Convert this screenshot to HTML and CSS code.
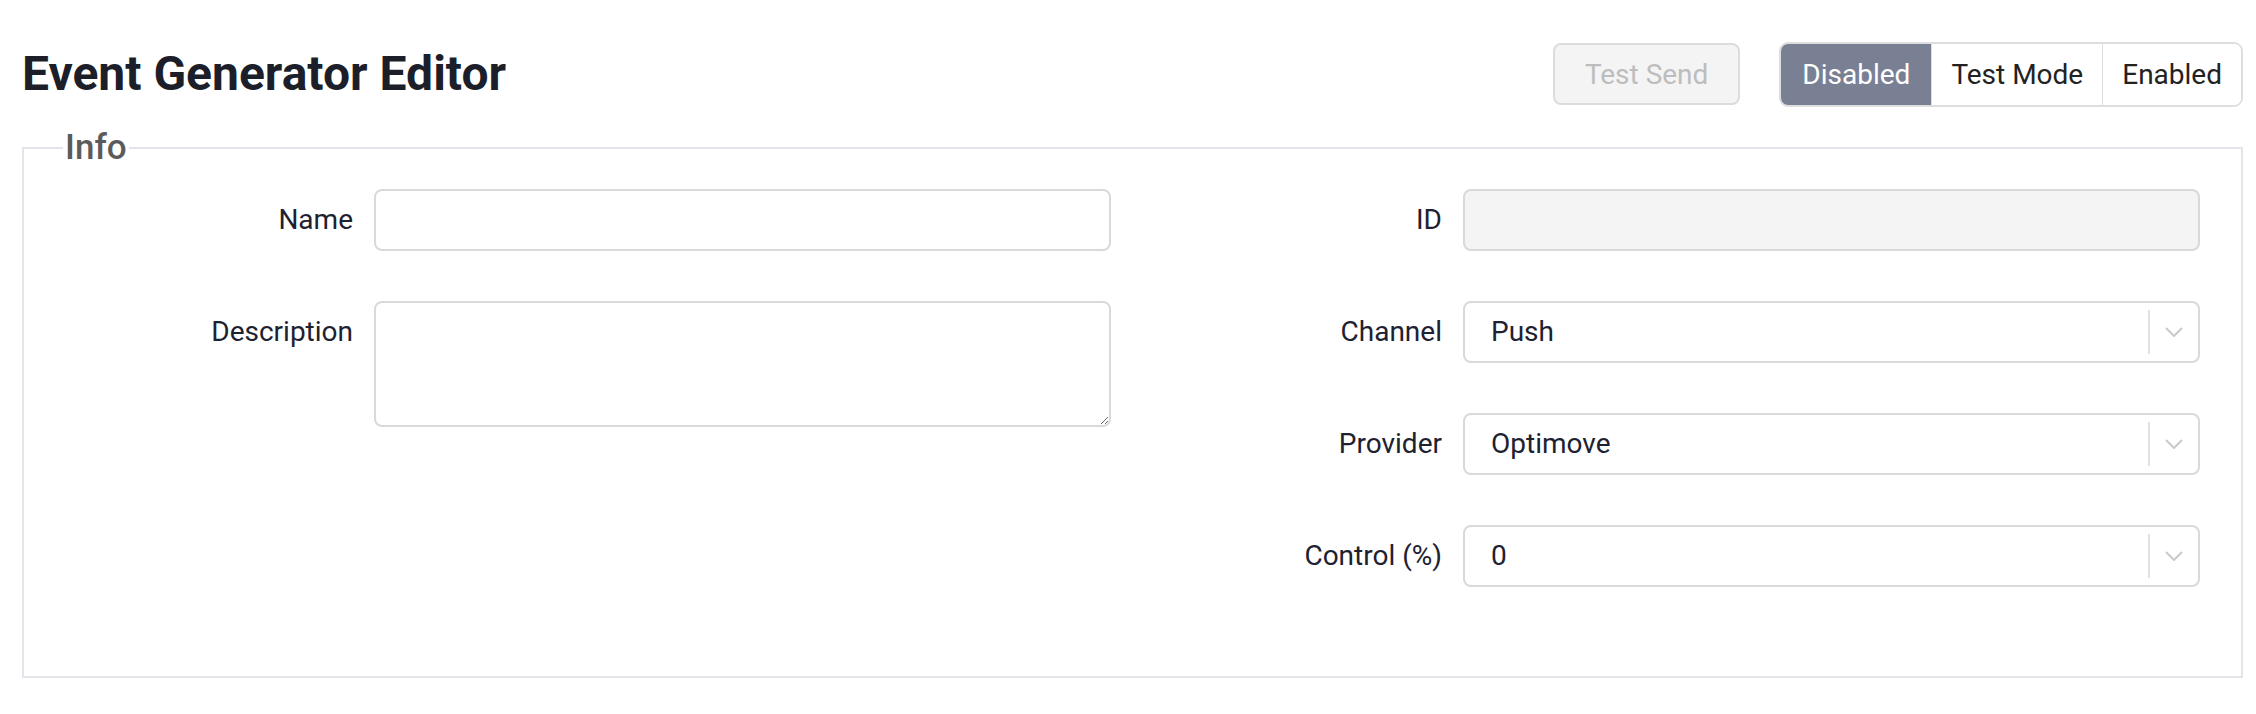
FILE: index.html
```html
<!DOCTYPE html>
<html lang="en">
<head>
<meta charset="utf-8">
<title>Event Generator Editor</title>
<link rel="stylesheet" href="styles.css">
</head>
<body>
<div class="page">
  <header class="header">
    <h1 class="title">Event Generator Editor</h1>
    <div class="actions">
      <button class="btn-test" disabled>Test Send</button>
      <div class="seg">
        <button class="seg-btn seg-active">Disabled</button>
        <button class="seg-btn">Test Mode</button>
        <button class="seg-btn">Enabled</button>
      </div>
    </div>
  </header>
  <fieldset class="box">
    <legend class="box-legend">Info</legend>
    <div class="cols">
      <div class="col">
        <div class="field">
          <label class="label">Name</label>
          <input class="input" type="text">
        </div>
        <div class="field">
          <label class="label">Description</label>
          <textarea class="input textarea"></textarea>
        </div>
      </div>
      <div class="col">
        <div class="field">
          <label class="label">ID</label>
          <input class="input input-disabled" type="text" disabled>
        </div>
        <div class="field">
          <label class="label">Channel</label>
          <div class="select">
            <span class="select-value">Push</span>
            <span class="select-sep"></span>
            <span class="select-ind"><svg width="18" height="10" viewBox="0 0 18 10"><polyline points="1,1 9,9 17,1" fill="none" stroke="#c9c9c9" stroke-width="2"/></svg></span>
          </div>
        </div>
        <div class="field">
          <label class="label">Provider</label>
          <div class="select">
            <span class="select-value">Optimove</span>
            <span class="select-sep"></span>
            <span class="select-ind"><svg width="18" height="10" viewBox="0 0 18 10"><polyline points="1,1 9,9 17,1" fill="none" stroke="#c9c9c9" stroke-width="2"/></svg></span>
          </div>
        </div>
        <div class="field">
          <label class="label">Control (%)</label>
          <div class="select">
            <span class="select-value">0</span>
            <span class="select-sep"></span>
            <span class="select-ind"><svg width="18" height="10" viewBox="0 0 18 10"><polyline points="1,1 9,9 17,1" fill="none" stroke="#c9c9c9" stroke-width="2"/></svg></span>
          </div>
        </div>
      </div>
    </div>
  </fieldset>
</div>
</body>
</html>
```
FILE: styles.css
```css
* { box-sizing: border-box; }

body {
  margin: 0;
  background: #ffffff;
  color: #1e2130;
  font-family: Roboto, "Liberation Sans", Arial, sans-serif;
}

.page {
  padding: 42px 13px 0 22px;
}

.header {
  display: flex;
  align-items: center;
  justify-content: space-between;
  height: 64px;
}

.title {
  margin: 0;
  font-size: 48px;
  font-weight: 700;
  line-height: 1;
  color: #1c1f2a;
}

.actions {
  display: flex;
  align-items: center;
  gap: 39px;
}

.btn-test {
  height: 62px;
  padding: 0 30px;
  border: 2px solid #dcdcdc;
  border-radius: 8px;
  background: #f4f4f4;
  color: #bdbdbd;
  font-family: inherit;
  font-size: 28px;
}

.seg {
  display: flex;
  height: 65px;
  border: 2px solid #dedede;
  border-radius: 9px;
  overflow: hidden;
}

.seg-btn {
  padding: 0 19px;
  border: 0;
  border-left: 1px solid #dedede;
  background: #ffffff;
  color: #222222;
  font-family: inherit;
  font-size: 28px;
}

.seg-btn.seg-active {
  padding: 0 21px;
  border-left: 0;
  background: #7a8093;
  color: #ffffff;
}

.box {
  margin: 21px 0 0 0;
  padding: 21px 0 89px 39px;
  border: 2px solid #e4e4ea;
  min-width: 0;
}

.box-legend {
  margin-left: 0;
  padding: 0 2px;
  font-size: 35px;
  font-weight: 500;
  color: #5b5b5b;
}

.cols {
  display: grid;
  grid-template-columns: 1fr 1fr;
}

.col {
  display: flex;
  flex-direction: column;
  gap: 50px;
  padding-right: 41px;
}

.field {
  display: grid;
  grid-template-columns: 290px 1fr;
  column-gap: 21px;
  align-items: start;
}

.label {
  text-align: right;
  font-size: 28px;
  line-height: 62px;
  color: #1e2130;
}

.input {
  height: 62px;
  width: 100%;
  border: 2px solid #d9d9d9;
  border-radius: 8px;
  background: #ffffff;
  font-family: inherit;
  font-size: 28px;
  padding: 0 24px;
  color: #1e2130;
}

.input-disabled {
  background: #f4f4f4;
}

.textarea {
  height: 126px;
  resize: vertical;
  padding: 12px 24px;
  display: block;
}

.select {
  display: flex;
  align-items: stretch;
  height: 62px;
  border: 2px solid #d9d9d9;
  border-radius: 8px;
  background: #ffffff;
}

.select-value {
  flex: 1;
  padding-left: 26px;
  font-size: 28px;
  line-height: 58px;
  color: #1e2130;
}

.select-sep {
  width: 2px;
  margin: 7px 0;
  background: #e2e2e2;
}

.select-ind {
  width: 48px;
  display: flex;
  align-items: center;
  justify-content: center;
}
```
